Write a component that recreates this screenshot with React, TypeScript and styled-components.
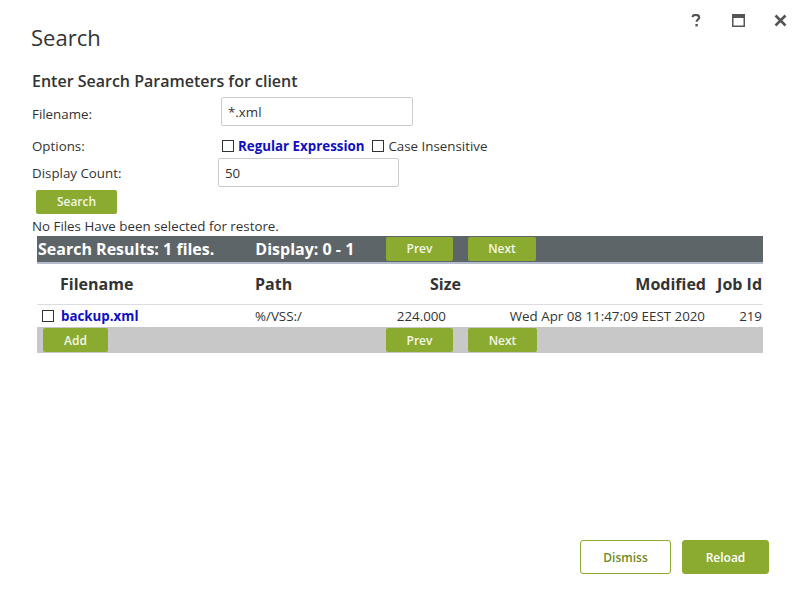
import styled, { createGlobalStyle } from "styled-components";

const green = "#8aab30";

const Global = createGlobalStyle`
  html, body { margin: 0; padding: 0; background: #fff; }
  body { font-family: "Open Sans", "DejaVu Sans", sans-serif; color: #333; }
`;

const Page = styled.div`
  height: 600px;
  box-sizing: border-box;
  display: flex;
  flex-direction: column;
  padding: 0 31px 26px 31px;
`;

const TopBar = styled.div`
  display: flex;
  justify-content: flex-end;
  align-items: center;
  gap: 28px;
  height: 40px;
  margin-right: -18px;
`;

const IconBtn = styled.span`
  width: 14px;
  height: 14px;
  display: flex;
  align-items: center;
  justify-content: center;
  color: #555;
`;

const Title = styled.h1`
  font-size: 22px;
  font-weight: 400;
  margin: -18px 0 0 0;
  line-height: 30px;
`;

const Subtitle = styled.h2`
  font-size: 16px;
  font-weight: 600;
  margin: 18px 0 0 1px;
  line-height: 22px;
`;

const Form = styled.div`
  display: grid;
  grid-template-columns: 187px auto;
  margin-left: 1px;
  margin-top: 5px;
  font-size: 13.33px;
`;

const Label = styled.div<{ $h: number; $top: number }>`
  height: ${(p) => p.$h}px;
  box-sizing: border-box;
  padding-top: ${(p) => p.$top}px;
  line-height: 20px;
`;

const TextInput = styled.input<{ $w: number; $shift?: number }>`
  display: block;
  width: ${(p) => p.$w}px;
  height: 29px;
  box-sizing: border-box;
  border: 1px solid #ccc;
  border-radius: 2px;
  padding: 0 6px;
  font: 13.33px "Open Sans", sans-serif;
  color: #333;
  margin-left: ${(p) => p.$shift ?? 0}px;
  outline: none;
`;

const Options = styled.div`
  display: flex;
  align-items: center;
  margin-left: 3px;
  height: 32px;
  box-sizing: border-box;
  padding-top: 8px;
`;

const Box = styled.span`
  width: 12px;
  height: 12px;
  border: 1px solid #333;
  box-sizing: border-box;
  display: inline-block;
  margin-right: 4px;
  background: #fff;
`;

const BlueLabel = styled.span`
  color: #1010c0;
  font-weight: 700;
  font-size: 13.33px;
  margin-right: 8px;
`;

const PlainLabel = styled.span`
  font-size: 13.33px;
`;

const GreenBtn = styled.button<{ $w: number }>`
  width: ${(p) => p.$w}px;
  height: 24px;
  background: ${green};
  border: none;
  border-radius: 2px;
  color: #f4f6e8;
  font: 600 12px "Open Sans", sans-serif;
  padding: 0;
  cursor: pointer;
`;

const SearchRow = styled.div`
  margin: 2px 0 0 5px;
`;

const Note = styled.div`
  font-size: 13.33px;
  margin: 4px 0 0 1px;
  line-height: 16px;
`;

const Results = styled.div`
  margin: 2px 6px 0 6px;
  width: 726px;
`;

const Bar = styled.div<{ $dark?: boolean }>`
  height: 26px;
  display: grid;
  grid-template-columns: 334px 67px 68px;
  column-gap: 15px;
  align-items: center;
  background: ${(p) => (p.$dark ? "#5d6568" : "#c8c8c8")};
  border-bottom: ${(p) => (p.$dark ? "2px solid #b4bccb" : "none")};
  color: #fff;
`;

const BarText = styled.div`
  display: flex;
  font-weight: 700;
  font-size: 16px;
  padding-left: 1px;
  white-space: nowrap;
`;

const BarSpan = styled.span<{ $w: number }>`
  width: ${(p) => p.$w}px;
`;

const BarLeft = styled.div`
  padding-left: 6px;
  display: flex;
  align-items: center;
`;

const Table = styled.table`
  width: 726px;
  border-collapse: collapse;
  table-layout: fixed;
`;

const Th = styled.th<{ $align: string; $pad: string; $w?: number }>`
  box-sizing: border-box;
  ${(p) => (p.$w ? `width: ${p.$w}px;` : "")}
  text-align: ${(p) => p.$align};
  padding: ${(p) => p.$pad};
  font-size: 16px;
  font-weight: 700;
  height: 41px;
  border-bottom: 1px solid #ddd;
  white-space: nowrap;
`;

const Td = styled.td<{ $align: string; $pad: string }>`
  text-align: ${(p) => p.$align};
  padding: ${(p) => p.$pad};
  font-size: 13.33px;
  height: 22px;
  white-space: nowrap;
`;

const FileLink = styled.span`
  color: #1010c0;
  font-weight: 700;
`;

const RowBox = styled(Box)`
  vertical-align: -1px;
  margin-right: 7px;
`;

const Footer = styled.div`
  margin-top: auto;
  display: flex;
  justify-content: flex-end;
  gap: 11px;
`;

const FooterBtn = styled.button<{ $primary?: boolean; $w: number }>`
  width: ${(p) => p.$w}px;
  height: 34px;
  border-radius: 3px;
  border: 1px solid ${green};
  background: ${(p) => (p.$primary ? green : "#fff")};
  color: ${(p) => (p.$primary ? "#fff" : "#6f8a22")};
  font: 600 12px "Open Sans", sans-serif;
  cursor: pointer;
`;

export default function App() {
  return (
    <>
      <Global />
      <Page>
        <TopBar>
          <IconBtn>
            <svg width="10" height="13" viewBox="0 0 10 13">
              <path
                d="M1.5 3.2 C1.8 1.3 3.2 0.8 4.8 0.8 C6.8 0.8 8.2 1.9 8.2 3.4 C8.2 5.4 5.6 5.6 5.6 7.8"
                fill="none"
                stroke="#555"
                strokeWidth="2.2"
              />
              <rect x="4.4" y="10" width="2.4" height="2.4" fill="#555" />
            </svg>
          </IconBtn>
          <IconBtn>
            <svg width="13" height="13" viewBox="0 0 13 13">
              <rect x="0" y="0" width="13" height="4" fill="#555" />
              <rect x="0.75" y="0.75" width="11.5" height="11.5" fill="none" stroke="#555" strokeWidth="1.5" />
            </svg>
          </IconBtn>
          <IconBtn>
            <svg width="13" height="13" viewBox="0 0 13 13">
              <path d="M1.5 1.5 L11.5 11.5 M11.5 1.5 L1.5 11.5" stroke="#555" strokeWidth="2.6" />
            </svg>
          </IconBtn>
        </TopBar>
        <Title>Search</Title>
        <Subtitle>Enter Search Parameters for client</Subtitle>
        <Form>
          <Label $h={29} $top={7}>Filename:</Label>
          <TextInput $w={192} $shift={2} defaultValue="*.xml" />
          <Label $h={32} $top={10}>Options:</Label>
          <Options>
            <Box />
            <BlueLabel>Regular Expression</BlueLabel>
            <Box />
            <PlainLabel>Case Insensitive</PlainLabel>
          </Options>
          <Label $h={29} $top={5}>Display Count:</Label>
          <TextInput $w={181} $shift={-1} defaultValue="50" />
        </Form>
        <SearchRow>
          <GreenBtn $w={81}>Search</GreenBtn>
        </SearchRow>
        <Note>No Files Have been selected for restore.</Note>
        <Results>
          <Bar $dark>
            <BarText>
              <BarSpan $w={218}>Search Results: 1 files.</BarSpan>
              <BarSpan $w={116}>Display: 0 - 1</BarSpan>
            </BarText>
            <GreenBtn $w={67}>Prev</GreenBtn>
            <GreenBtn $w={68}>Next</GreenBtn>
          </Bar>
          <Table>
            <thead>
              <tr>
                <Th $align="left" $pad="0 0 0 23px" $w={213}>Filename</Th>
                <Th $align="left" $pad="0 0 0 5px" $w={120}>Path</Th>
                <Th $align="right" $pad="0 5px 0 0" $w={96}>Size</Th>
                <Th $align="right" $pad="0 4px 0 0" $w={244}>Modified</Th>
                <Th $align="right" $pad="0 1px 0 0">Job Id</Th>
              </tr>
            </thead>
            <tbody>
              <tr>
                <Td $align="left" $pad="0 0 0 5px">
                  <RowBox />
                  <FileLink>backup.xml</FileLink>
                </Td>
                <Td $align="left" $pad="0 0 0 5px">%/VSS:/</Td>
                <Td $align="right" $pad="0 20px 0 0">224.000</Td>
                <Td $align="right" $pad="0 5px 0 0">Wed Apr 08 11:47:09 EEST 2020</Td>
                <Td $align="right" $pad="0 1px 0 0">219</Td>
              </tr>
            </tbody>
          </Table>
          <Bar>
            <BarLeft>
              <GreenBtn $w={65}>Add</GreenBtn>
            </BarLeft>
            <GreenBtn $w={67}>Prev</GreenBtn>
            <GreenBtn $w={69}>Next</GreenBtn>
          </Bar>
        </Results>
        <Footer>
          <FooterBtn $w={91}>Dismiss</FooterBtn>
          <FooterBtn $primary $w={87}>Reload</FooterBtn>
        </Footer>
      </Page>
    </>
  );
}
